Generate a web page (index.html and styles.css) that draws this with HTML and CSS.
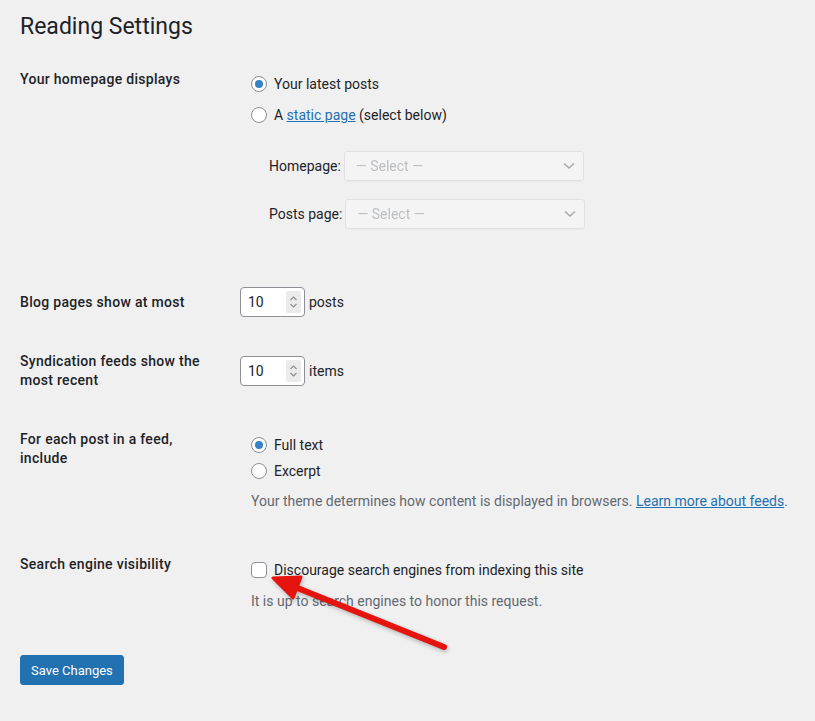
FILE: index.html
```html
<!DOCTYPE html>
<html lang="en">
<head>
    <meta charset="UTF-8">
    <meta name="viewport" content="width=device-width, initial-scale=1.0">
    <title>Reading Settings</title>
    <link rel="stylesheet" href="styles.css">
</head>
<body>

<div class="wrap">
    <h1 class="page-title">Reading Settings</h1>

    <form class="settings" onsubmit="return false">
        <div class="row">
            <div class="row-label">Your homepage displays</div>
            <div class="row-field field-front">
                <fieldset class="choices">
                    <label class="choice"><input type="radio" name="show_on_front" checked> <span>Your latest posts</span></label>
                    <label class="choice"><input type="radio" name="show_on_front"> <span>A <a href="#">static page</a> (select below)</span></label>
                    <ul class="page-picks">
                        <li>
                            <label class="pick">Homepage:
                                <span class="select">
                                    <select disabled><option>&mdash; Select &mdash;</option></select>
                                    <svg class="chevron" width="12" height="8" viewBox="0 0 12 8"><polyline points="1,1.5 6,6 11,1.5" fill="none" stroke="#a7aaad" stroke-width="1.6"/></svg>
                                </span>
                            </label>
                        </li>
                        <li>
                            <label class="pick">Posts page:
                                <span class="select">
                                    <select disabled><option>&mdash; Select &mdash;</option></select>
                                    <svg class="chevron" width="12" height="8" viewBox="0 0 12 8"><polyline points="1,1.5 6,6 11,1.5" fill="none" stroke="#a7aaad" stroke-width="1.6"/></svg>
                                </span>
                            </label>
                        </li>
                    </ul>
                </fieldset>
            </div>
        </div>

        <div class="row row-center">
            <div class="row-label">Blog pages show at most</div>
            <div class="row-field inline-field">
                <span class="number">
                    <input type="text" value="10">
                    <span class="spin">
                        <svg width="9" height="16" viewBox="0 0 9 16"><polyline points="1.5,6 4.5,3 7.5,6" fill="none" stroke="#8c8f94" stroke-width="1.2"/><polyline points="1.5,10 4.5,13 7.5,10" fill="none" stroke="#8c8f94" stroke-width="1.2"/></svg>
                    </span>
                </span>
                <span>posts</span>
            </div>
        </div>

        <div class="row row-center">
            <div class="row-label">Syndication feeds show the most recent</div>
            <div class="row-field inline-field">
                <span class="number">
                    <input type="text" value="10">
                    <span class="spin">
                        <svg width="9" height="16" viewBox="0 0 9 16"><polyline points="1.5,6 4.5,3 7.5,6" fill="none" stroke="#8c8f94" stroke-width="1.2"/><polyline points="1.5,10 4.5,13 7.5,10" fill="none" stroke="#8c8f94" stroke-width="1.2"/></svg>
                    </span>
                </span>
                <span>items</span>
            </div>
        </div>

        <div class="row">
            <div class="row-label">For each post in a feed, include</div>
            <div class="row-field field-feed">
                <fieldset class="choices choices-tight">
                    <label class="choice"><input type="radio" name="rss_use_excerpt" checked> <span>Full text</span></label>
                    <label class="choice"><input type="radio" name="rss_use_excerpt"> <span>Excerpt</span></label>
                    <p class="description">Your theme determines how content is displayed in browsers. <a href="#">Learn more about feeds</a>.</p>
                </fieldset>
            </div>
        </div>

        <div class="row">
            <div class="row-label">Search engine visibility</div>
            <div class="row-field field-visibility">
                <fieldset class="choices">
                    <label class="choice"><input type="checkbox" name="blog_public"> <span>Discourage search engines from indexing this site</span></label>
                    <p class="description">It is up to search engines to honor this request.</p>
                </fieldset>
            </div>
        </div>

        <p class="submit">
            <button class="button" type="submit">Save Changes</button>
        </p>
    </form>
</div>

<!-- annotation arrow drawn over the screenshot -->
<svg class="annotation" width="815" height="721" viewBox="0 0 815 721">
    <line x1="444" y1="647" x2="295" y2="587" stroke="#e5140f" stroke-width="6" stroke-linecap="round"/>
    <polygon points="273,578 301,577 293,598" fill="#e5140f" stroke="#e5140f" stroke-width="3" stroke-linejoin="round"/>
</svg>

</body>
</html>
```

FILE: styles.css
```css
body {
    font-family: 'Roboto', 'Liberation Sans', sans-serif;
    font-size: 14px;
    color: #1d2327;
    background: #f0f0f1;
    margin: 0;
}
a {
    color: #2271b1;
}
.wrap {
    padding: 0 0 0 20px;
}
.page-title {
    font-size: 23px;
    font-weight: 400;
    line-height: 30px;
    margin: 0;
    padding-top: 12px;
}
.settings {
    margin-top: 8px;
}
.row {
    display: grid;
    grid-template-columns: 220px 1fr;
    align-items: start;
}
.row-center {
    align-items: center;
}
.row-label {
    width: 190px;
    padding: 20px 30px 20px 0;
    font-weight: 500;
    letter-spacing: 0.3px;
    line-height: 19px;
}
.row-field {
    padding: 15px 10px 15px 0;
    line-height: 19px;
}
.field-front {
    padding-top: 24px;
    padding-bottom: 43px;
}
.field-feed {
    padding-top: 25px;
    padding-bottom: 24px;
}
.field-visibility {
    padding-top: 25px;
}
.choices {
    border: none;
    margin: 0;
    padding: 0 0 0 11px;
}
.choice {
    display: flex;
    align-items: center;
    gap: 7px;
    height: 20px;
}
.choice + .choice {
    margin-top: 11px;
}
.choices-tight .choice + .choice {
    margin-top: 6px;
}
.choice input {
    appearance: none;
    width: 16px;
    height: 16px;
    margin: 0;
    border: 1px solid #8c8f94;
    background: #fff;
    flex-shrink: 0;
}
.choice input[type="radio"] {
    border-radius: 50%;
    display: grid;
    place-items: center;
}
.choice input[type="radio"]:checked::before {
    content: "";
    width: 8px;
    height: 8px;
    border-radius: 50%;
    background: #3582c4;
}
.choice input[type="checkbox"] {
    border-radius: 4px;
}
.page-picks {
    list-style: none;
    margin: 26px 0 0 18px;
    padding: 0;
}
.page-picks li + li {
    margin-top: 18px;
}
.pick {
    display: flex;
    align-items: center;
    gap: 3px;
}
.select {
    position: relative;
    display: inline-block;
}
.select select {
    appearance: none;
    width: 240px;
    height: 30px;
    padding: 0 24px 0 11px;
    font-family: inherit;
    font-size: 14px;
    color: #a7aaad;
    background: #f6f7f7;
    border: 1px solid #dcdcde;
    border-radius: 3px;
    box-shadow: 0 1px 1px rgba(0, 0, 0, 0.04);
}
.chevron {
    position: absolute;
    right: 9px;
    top: 11px;
}
.inline-field {
    display: flex;
    align-items: center;
    gap: 4px;
}
.number {
    display: inline-flex;
    align-items: center;
    box-sizing: border-box;
    width: 65px;
    height: 30px;
    background: #fff;
    border: 1px solid #8c8f94;
    border-radius: 4px;
}
.number input {
    width: 38px;
    border: none;
    outline: none;
    padding: 0 0 0 7px;
    font-family: inherit;
    font-size: 14px;
    color: #1d2327;
    background: transparent;
}
.spin {
    display: grid;
    place-items: center;
    width: 15px;
    height: 22px;
    margin-left: auto;
    margin-right: 3px;
    background: #ebebec;
    border-radius: 2px;
}
.description {
    color: #646970;
    margin: 11px 0 0;
}
.field-visibility .description {
    margin-top: 12px;
}
.submit {
    margin: 29px 0 0;
    padding: 0;
}
.button {
    font-family: inherit;
    font-size: 13px;
    color: #fff;
    background: #2271b1;
    border: 1px solid #2271b1;
    border-radius: 3px;
    height: 30px;
    padding: 0 10px;
    cursor: pointer;
}
.annotation {
    position: absolute;
    top: 0;
    left: 0;
    pointer-events: none;
    filter: drop-shadow(1px 2px 2px rgba(0, 0, 0, 0.25));
}
```
